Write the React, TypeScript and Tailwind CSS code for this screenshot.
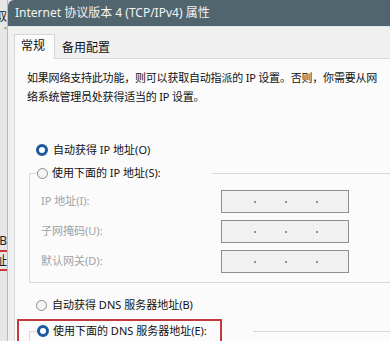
import React from 'react';

const font = "font-['Noto_Sans','Noto_Sans_CJK_SC',sans-serif]";

function Radio({ checked }: { checked?: boolean }) {
  return checked ? (
    <span className="block w-[12px] h-[12px] shrink-0 rounded-full border-[3px] border-[#1b5a9e] bg-white" />
  ) : (
    <span className="block w-[11px] h-[11px] shrink-0 rounded-full border border-[#8c8c8c] bg-[#f4f4f4]" />
  );
}

function IpBox() {
  return (
    <div className="h-[23px] w-[128px] border border-[#8e8e8e] bg-[#f1f1f1] flex items-center pl-[32px] gap-[29px]">
      <span className="block w-[2px] h-[2px] rounded-full bg-[#6f6f6f]" />
      <span className="block w-[2px] h-[2px] rounded-full bg-[#6f6f6f]" />
      <span className="block w-[2px] h-[2px] rounded-full bg-[#6f6f6f]" />
    </div>
  );
}

const ipRows = ['IP 地址(I):', '子网掩码(U):', '默认网关(D):'];

export default function App() {
  return (
    <div className={`w-[390px] h-[341px] flex overflow-hidden bg-[#e6e6e6] ${font}`}>
      {/* window behind the dialog */}
      <div className="w-[8px] shrink-0 flex flex-col border-r border-[#b9b9b9] text-[12px] leading-[14px] text-[#222]">
        <div className="h-[10px]" />
        <div className="flex justify-end overflow-hidden">取</div>
        <div className="mt-[2px] h-[6px] flex justify-end overflow-hidden text-[#666] leading-[6px]">·</div>
        <div className="h-[202px]" />
        <div className="flex justify-end overflow-hidden">B</div>
        <div className="h-[2px] bg-[#c9393c] mt-[2px]" />
        <div className="flex justify-end overflow-hidden mt-[2px]">址</div>
        <div className="h-[2px] bg-[#c9393c] mt-[1px]" />
      </div>

      {/* dialog */}
      <div className="flex-1 flex flex-col rounded-tl-[6px] overflow-hidden">
        <div className="h-[27px] shrink-0 bg-[#50656e] flex items-center pl-[7px] text-[12px] text-[#f2f4f5] border-b border-[#dfe7ea]">
          Internet 协议版本 4 (TCP/IPv4) 属性
        </div>

        <div className="flex-1 flex flex-col bg-[#f0f0f0] pl-[6px]">
          <div className="flex items-start pt-[7px] text-[12px] leading-[18px] text-[#111]">
            <div className="relative z-10 h-[25px] w-[41px] mb-[-1px] bg-[#fbfbfb] border border-b-0 border-[#d6d6d6] pl-[6px] pt-[2px]">
              常规
            </div>
            <div className="mt-[5px] pl-[7px]">备用配置</div>
          </div>

          <div className="flex-1 flex flex-col bg-[#fbfbfb] border-l border-t border-[#d9d9d9] overflow-hidden text-[11px] text-[#111]">
            <p className="mt-[9px] ml-[12px] leading-[19px] tracking-[-0.2px]">
              如果网络支持此功能，则可以获取自动指派的 IP 设置。否则，你需要从网
              <br />
              络系统管理员处获得适当的 IP 设置。
            </p>

            <div className="mt-[35px] ml-[21px] h-[18px] flex items-center gap-[5px]">
              <Radio checked />
              <span>自动获得 IP 地址(O)</span>
            </div>

            <fieldset className="mt-[5px] ml-[14px] mr-[-30px] border border-[#d9d9d9] pl-[7px] pb-[9px]">
              <legend className="w-[175px]">
                <div className="h-[18px] flex items-center gap-[4px]">
                  <Radio />
                  <span>使用下面的 IP 地址(S):</span>
                </div>
              </legend>
              <div className="pt-[8px] grid grid-cols-[184px_128px] gap-y-[7px] text-[#a2a2a2]">
                {ipRows.map((label) => (
                  <React.Fragment key={label}>
                    <div className="h-[23px] flex items-center pl-[4px]">{label}</div>
                    <IpBox />
                  </React.Fragment>
                ))}
              </div>
            </fieldset>

            <div className="mt-[13px] ml-[21px] h-[18px] flex items-center gap-[5px]">
              <Radio />
              <span>自动获得 DNS 服务器地址(B)</span>
            </div>

            <div className="relative mt-[8px]">
              <fieldset className="ml-[14px] mr-[-30px] border border-[#d9d9d9] pl-[7px] h-[60px]">
                <legend className="w-[216px]">
                  <div className="h-[18px] flex items-center gap-[4px]">
                    <Radio checked />
                    <span>使用下面的 DNS 服务器地址(E):</span>
                  </div>
                </legend>
              </fieldset>
              <div className="absolute top-[-3px] left-[2px] w-[205px] h-[32px] border-2 border-[#c5383c]" />
            </div>
          </div>
        </div>
      </div>
    </div>
  );
}
